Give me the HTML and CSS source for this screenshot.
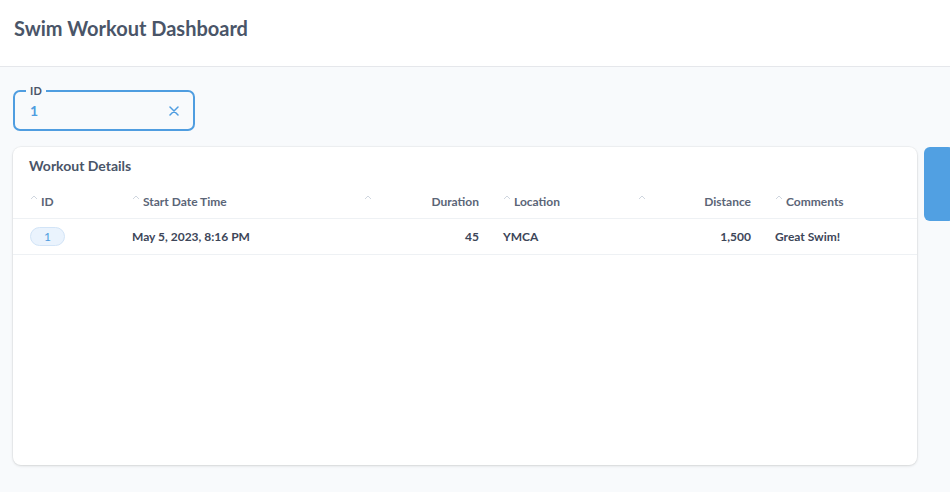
FILE: index.html
```html
<!DOCTYPE html>
<html>
<head>
<meta charset="utf-8">
<link rel="stylesheet" href="styles.css">
</head>
<body>
<header class="topbar">
  <h1 class="title">Swim Workout Dashboard</h1>
</header>
<main class="main">
  <fieldset class="field">
    <legend class="field-label">ID</legend>
    <div class="field-row">
      <span class="field-value">1</span>
      <svg class="clear" width="10" height="10" viewBox="0 0 10 10"><path d="M1 1L9 9M9 1L1 9" stroke="#4f9de0" stroke-width="1.5" stroke-linecap="round"/></svg>
    </div>
  </fieldset>
  <div class="content">
    <section class="card">
      <h2 class="card-title">Workout Details</h2>
      <div class="table">
        <div class="row head">
          <div class="cell"><svg class="sort" width="8" height="5" viewBox="0 0 8 5"><path d="M1 4L4 1L7 4" fill="none" stroke="#cfd6df" stroke-width="1"/></svg><span>ID</span></div>
          <div class="cell"><svg class="sort" width="8" height="5" viewBox="0 0 8 5"><path d="M1 4L4 1L7 4" fill="none" stroke="#cfd6df" stroke-width="1"/></svg><span>Start Date Time</span></div>
          <div class="cell num"><svg class="sort" width="8" height="5" viewBox="0 0 8 5"><path d="M1 4L4 1L7 4" fill="none" stroke="#cfd6df" stroke-width="1"/></svg><span class="grow">Duration</span></div>
          <div class="cell"><svg class="sort" width="8" height="5" viewBox="0 0 8 5"><path d="M1 4L4 1L7 4" fill="none" stroke="#cfd6df" stroke-width="1"/></svg><span>Location</span></div>
          <div class="cell num"><svg class="sort" width="8" height="5" viewBox="0 0 8 5"><path d="M1 4L4 1L7 4" fill="none" stroke="#cfd6df" stroke-width="1"/></svg><span class="grow">Distance</span></div>
          <div class="cell"><svg class="sort" width="8" height="5" viewBox="0 0 8 5"><path d="M1 4L4 1L7 4" fill="none" stroke="#cfd6df" stroke-width="1"/></svg><span>Comments</span></div>
        </div>
        <div class="row data">
          <div class="cell"><span class="badge">1</span></div>
          <div class="cell">May 5, 2023, 8:16 PM</div>
          <div class="cell num"><span class="grow">45</span></div>
          <div class="cell">YMCA</div>
          <div class="cell num"><span class="grow">1,500</span></div>
          <div class="cell">Great Swim!</div>
        </div>
      </div>
    </section>
    <div class="tab"></div>
  </div>
</main>
</body>
</html>
```
FILE: styles.css
```css
* { box-sizing: border-box; }
html, body { margin: 0; padding: 0; }
body {
  font-family: Lato, "Open Sans", sans-serif;
  background: #f8fafc;
  color: #3d4659;
  width: 950px;
  height: 492px;
  overflow: hidden;
}
.topbar {
  height: 67px;
  background: #fff;
  border-bottom: 1px solid #e5e7eb;
  padding: 14px 14px 0;
}
.title {
  margin: 0;
  font-size: 20px;
  line-height: 28px;
  font-weight: 700;
  color: #4a5568;
}
.main {
  padding: 18px 13px 0;
}
.field {
  margin: 0;
  width: 182px;
  height: 46px;
  border: 2px solid #4f9de0;
  border-radius: 7px;
  padding: 0 14px 0 11px;
}
.field-label {
  font-size: 11px;
  line-height: 12px;
  font-weight: 700;
  color: #4a5568;
  padding: 0 4px;
  letter-spacing: 0.3px;
}
.field-row {
  display: flex;
  align-items: center;
  justify-content: space-between;
  padding-left: 4px;
  height: 30px;
  padding-bottom: 3px;
}
.field-value {
  font-size: 14px;
  font-weight: 700;
  color: #4f9de0;
}
.clear { display: block; }
.content {
  display: flex;
  gap: 7px;
  margin-top: 16px;
}
.card {
  flex: 0 0 904px;
  height: 318px;
  background: #fff;
  border-radius: 8px;
  box-shadow: 0 1px 3px rgba(0,0,0,0.12), 0 0 0 1px rgba(0,0,0,0.03);
  padding-top: 10px;
}
.card-title {
  margin: 0 0 0 16px;
  font-size: 14px;
  line-height: 18px;
  font-weight: 700;
  color: #4a5568;
}
.table { margin-top: 9px; }
.row {
  display: grid;
  grid-template-columns: 107px 232px 139px 135px 137px 1fr;
  border-bottom: 1px solid #eef1f4;
  font-size: 12px;
  font-weight: 700;
}
.row.head { height: 35px; color: #5b6577; }
.row.data { height: 36px; color: #3d4659; }
.cell {
  display: flex;
  align-items: center;
  padding: 0 12px;
  white-space: nowrap;
}
.cell:first-child { padding-left: 17px; }
.sort { margin-right: 3px; margin-top: -7px; flex: none; }
.grow { flex: 1; text-align: right; }
.badge {
  display: inline-block;
  width: 35px;
  height: 19px;
  line-height: 17px;
  text-align: center;
  border-radius: 10px;
  background: #eaf3fd;
  border: 1px solid #d2e4f7;
  color: #4f9de0;
  font-weight: 400;
}
.tab {
  flex: 0 0 30px;
  height: 74px;
  background: #51a0e2;
  border-radius: 6px;
}
```
